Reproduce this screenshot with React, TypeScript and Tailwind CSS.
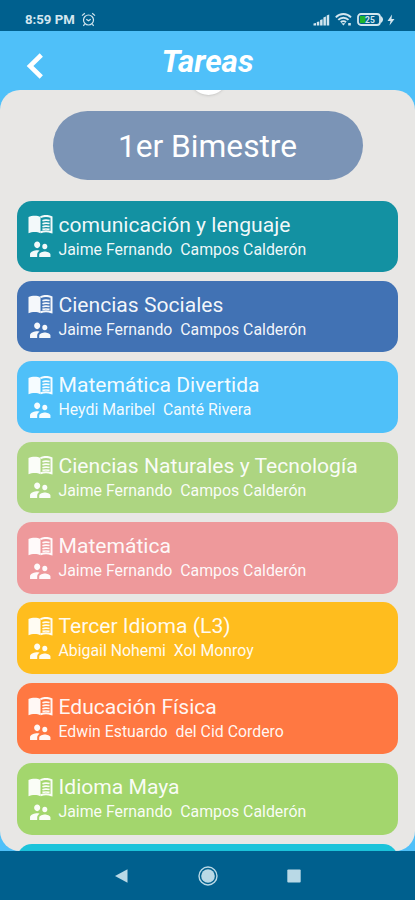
import { MdSupervisorAccount } from "react-icons/md";

const courses = [
  { name: "comunicación y lenguaje", teacher: "Jaime Fernando  Campos Calderón", color: "bg-[#1391a2]" },
  { name: "Ciencias Sociales", teacher: "Jaime Fernando  Campos Calderón", color: "bg-[#4172b4]" },
  { name: "Matemática Divertida", teacher: "Heydi Maribel  Canté Rivera", color: "bg-[#4fc0f9]" },
  { name: "Ciencias Naturales y Tecnología", teacher: "Jaime Fernando  Campos Calderón", color: "bg-[#add581]" },
  { name: "Matemática", teacher: "Jaime Fernando  Campos Calderón", color: "bg-[#ee999b]" },
  { name: "Tercer Idioma (L3)", teacher: "Abigail Nohemi  Xol Monroy", color: "bg-[#ffbd1e]" },
  { name: "Educación Física", teacher: "Edwin Estuardo  del Cid Cordero", color: "bg-[#ff7842]" },
  { name: "Idioma Maya", teacher: "Jaime Fernando  Campos Calderón", color: "bg-[#a3d66d]" },
  { name: "", teacher: "", color: "bg-[#1bc3da]" },
];

const StatusBar = () => (
  <div className="flex h-[31px] shrink-0 items-center justify-between bg-[#00608e] pl-[25px] pr-[20px] pt-[8px] text-[#d3e6ef]">
    <div className="flex items-center gap-[6px]">
      <span className="text-[13.2px] leading-none font-bold">8:59 PM</span>
      <svg className="h-[15px] w-[15px]" viewBox="0 0 15 15" fill="none" stroke="currentColor" strokeWidth="1.2">
        <circle cx="7.5" cy="8" r="5" />
        <path d="M1 3.6 3.8 1.2M14 3.6 11.2 1.2M3.6 12.2l-1.2 1.6M11.4 12.2l1.2 1.6M5.3 7.2l2.2 1.6 2.2-1.6" />
      </svg>
    </div>
    <div className="flex items-center">
      <svg className="h-[12px] w-[17px]" viewBox="0 0 17 12" fill="currentColor">
        <path d="M.5 9.5 3 9v2.5H.5zM3.8 8l2.5-.6v4.1H3.8zM7.1 6l2.5-.8v6.3H7.1zM10.4 3.6l2.5-1v8.9h-2.5zM13.7 1.4l2.5-1v11.1h-2.5z" />
      </svg>
      <svg className="ml-[5px] h-[13px] w-[17px]" viewBox="0 0 17 13" fill="none" stroke="currentColor" strokeWidth="1.9">
        <path d="M.8 4.3a10.5 10.5 0 0 1 15.2 0M3.3 6.9a7 7 0 0 1 10.2 0M5.8 9.3a3.7 3.7 0 0 1 5.2 0" />
        <path d="M6.4 10.2h4l-2 2.3zM13.2 10h2.6v2.4h-2.6z" fill="currentColor" stroke="none" />
      </svg>
      <svg className="ml-[5px] h-[13px] w-[27px]" viewBox="0 0 27 13">
        <rect x="1" y="1" width="22" height="11" rx="3" fill="none" stroke="currentColor" strokeWidth="1.8" />
        <path d="M23.5 3c3.4 1.2 3.4 5.8 0 7z" fill="currentColor" />
        <rect x="3" y="3" width="5.5" height="7" fill="#1cb52c" />
        <text x="8" y="9.8" fontSize="8.5" fontWeight="bold" fill="currentColor">25</text>
      </svg>
      <svg className="ml-[3px] h-[12px] w-[8px]" viewBox="0 0 8 12" fill="currentColor">
        <path d="M5 .5.5 7h3L2.5 11.5 7.5 5h-3z" />
      </svg>
    </div>
  </div>
);

const Header = () => (
  <header className="relative flex h-[59px] shrink-0 items-start justify-center">
    <svg className="absolute left-[25px] top-[21px] h-[28px] w-[19px]" viewBox="0 0 19 28" fill="none" stroke="white" strokeWidth="4.6">
      <path d="M16.3 3 5 14l11.3 11" />
    </svg>
    <h1 className="pt-[12px] text-[31.4px] leading-[38px] font-bold italic text-white">Tareas</h1>
  </header>
);

// Open book: solid left page, ruled right page
const BookIcon = () => (
  <svg className="h-[19px] w-[25px] shrink-0" viewBox="0 0 25 19" fill="none" stroke="currentColor">
    <path d="M.5 2C4 .2 9.5.2 12.5 2v16.2C9.5 16.6 4 16.6.5 18.2z" fill="currentColor" stroke="none" />
    <path d="M12.5 2.2c3-1.4 8-1.4 11 0v15c-3-1-8-1-11 0" strokeWidth="2" />
    <path d="M14.4 5.7c2-.7 5-.7 7.2-.1M14.4 8.7c2-.7 5-.7 7.2-.1M14.4 11.7c2-.7 5-.7 7.2-.1M14.4 14.4c2-.5 5-.5 7.2 0" strokeWidth="1.6" />
  </svg>
);

const CourseCard = ({ name, teacher, color }: (typeof courses)[number]) => (
  <div className={`h-[71.5px] shrink-0 rounded-[15px] pl-[11px] pt-[11px] text-white/95 ${color}`}>
    {name && (
      <>
        <div className="flex h-[26px] items-center">
          <BookIcon />
          <span className="ml-[5.5px] text-[21.1px] leading-[26px] whitespace-pre">{name}</span>
        </div>
        <div className="flex h-[24px] items-center">
          <MdSupervisorAccount className="h-[26.5px] w-[24.5px] shrink-0" preserveAspectRatio="none" />
          <span className="ml-[6px] text-[15.85px] leading-[24px] whitespace-pre">{teacher}</span>
        </div>
      </>
    )}
  </div>
);

const NavBar = () => (
  <div className="flex h-[49px] shrink-0 items-center justify-center gap-[69px] bg-[#00608e] text-[#b9d9e6]">
    <svg className="h-[14px] w-[14px]" viewBox="0 0 14 14" fill="currentColor">
      <path d="M0 7 12.5 .3v13.4z" />
    </svg>
    <svg className="h-[20px] w-[20px]" viewBox="0 0 20 20">
      <circle cx="10" cy="10" r="9" fill="none" stroke="currentColor" strokeWidth="1.4" />
      <circle cx="10" cy="10" r="6.8" fill="currentColor" />
    </svg>
    <svg className="h-[14px] w-[14px]" viewBox="0 0 14 14" fill="currentColor">
      <rect x=".3" y=".5" width="13.4" height="13" rx="1" />
    </svg>
  </div>
);

const App = () => {
  return (
    <div className="flex h-[900px] w-[415px] flex-col overflow-hidden bg-[#4fc0f9] font-[Roboto,sans-serif]">
      <StatusBar />
      <Header />
      <main className="relative flex min-h-0 flex-1 flex-col overflow-hidden rounded-[20px] bg-[#e8e7e5]">
        {/* Pull-to-refresh bubble peeking from the top edge */}
        <div className="absolute left-[189px] top-[-34px] h-[39px] w-[39px] rounded-full bg-white shadow" />
        <div className="mx-auto mt-[21px] flex h-[69px] w-[310px] shrink-0 items-center justify-center rounded-full bg-[#7b94b6]">
          <span className="pt-[2px] text-[31.7px] leading-none text-white">1er Bimestre</span>
        </div>
        <div className="mt-[20.5px] flex flex-col gap-[8.9px] px-[17px]">
          {courses.map((course, index) => (
            <CourseCard key={index} {...course} />
          ))}
        </div>
      </main>
      <NavBar />
    </div>
  );
};

export default App;
